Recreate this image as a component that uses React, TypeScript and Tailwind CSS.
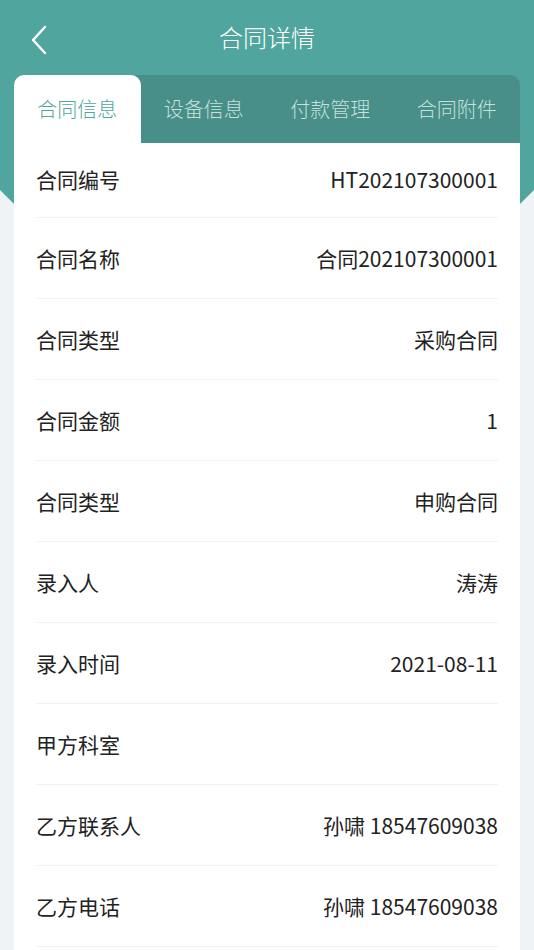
import React, { useState } from 'react';

const tabs = ['合同信息', '设备信息', '付款管理', '合同附件'];

const rows: { label: string; value: string }[] = [
  { label: '合同编号', value: 'HT202107300001' },
  { label: '合同名称', value: '合同202107300001' },
  { label: '合同类型', value: '采购合同' },
  { label: '合同金额', value: '1' },
  { label: '合同类型', value: '申购合同' },
  { label: '录入人', value: '涛涛' },
  { label: '录入时间', value: '2021-08-11' },
  { label: '甲方科室', value: '' },
  { label: '乙方联系人', value: '孙啸 18547609038' },
  { label: '乙方电话', value: '孙啸 18547609038' },
];

export default function App() {
  const [active, setActive] = useState(0);

  return (
    <div
      className="relative min-h-screen bg-[#eff3f6] overflow-hidden"
      style={{ fontFamily: '"Noto Sans CJK SC", "Noto Sans", sans-serif' }}
    >
      {/* teal backdrop behind the card */}
      <div className="absolute inset-x-0 top-0 h-[460px] bg-[#50a69e] [clip-path:polygon(0_0,100%_0,100%_190px,50%_457px,0_190px)]" />

      <div className="relative">
        <div className="relative h-[75px] flex items-center justify-center">
          <button className="absolute left-[26px] top-[20px] p-1">
            <svg width="18" height="32" viewBox="0 0 18 32" fill="none">
              <path d="M15 3 L3 16 L15 29" stroke="#fff" strokeWidth="2.4" strokeLinecap="round" strokeLinejoin="round" />
            </svg>
          </button>
          <h1 className="text-[24px] leading-none text-white font-light pb-[1px]">合同详情</h1>
        </div>

        <div className="mx-[14px]">
          <div className="flex h-[68px] bg-[#478f88] rounded-t-[10px]">
            {tabs.map((t, i) => (
              <button
                key={t}
                onClick={() => setActive(i)}
                className={
                  i === active
                    ? 'flex-1 flex items-center justify-center bg-white rounded-t-[10px] text-[20px] font-light text-[#50a69e]'
                    : 'flex-1 flex items-center justify-center text-[20px] font-light text-[#c6e0dc]'
                }
              >
                {t}
              </button>
            ))}
          </div>

          <div className="bg-white px-[22px] pb-10">
            {rows.map((r, i) => (
              <div
                key={i}
                className={
                  (i === 0 ? 'h-[75px]' : 'h-[81px] pt-[1px]') +
                  ' flex items-center justify-between border-b border-[#f1f2f4] text-[21px] text-[#222]'
                }
              >
                <span>{r.label}</span>
                <span>{r.value}</span>
              </div>
            ))}
          </div>
        </div>
      </div>
    </div>
  );
}
